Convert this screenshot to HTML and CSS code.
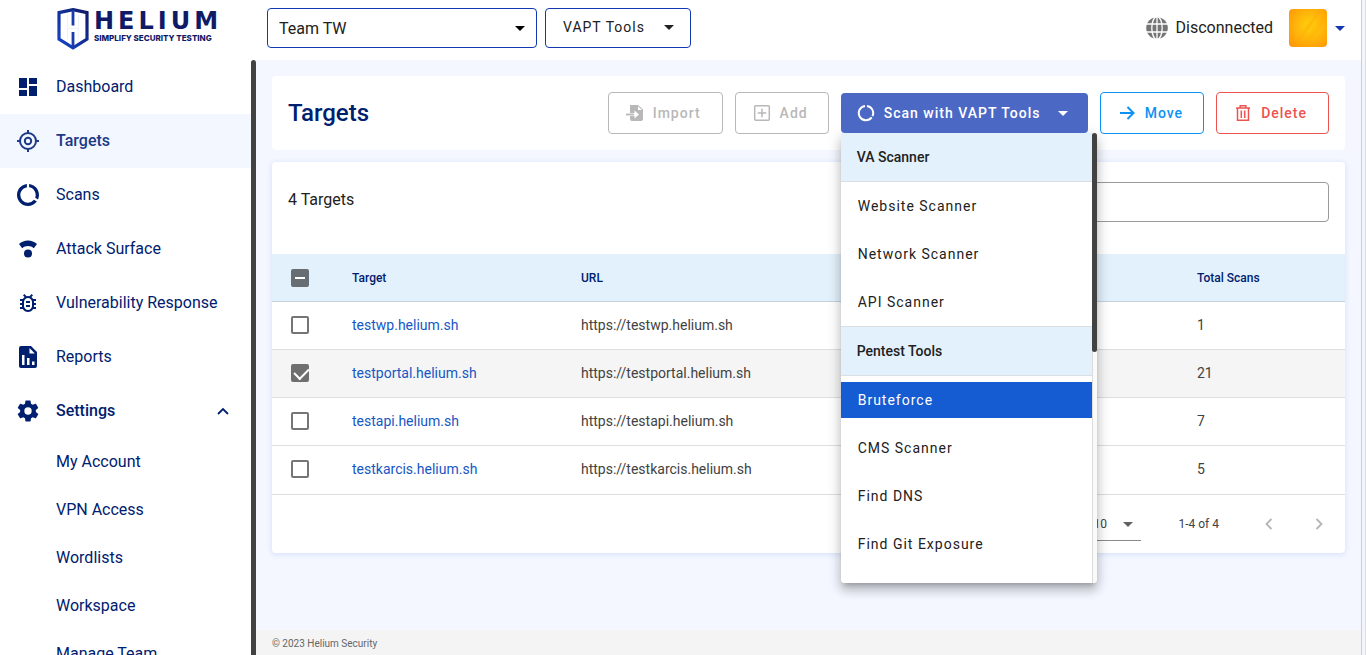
FILE: index.html
```html
<!DOCTYPE html>
<html lang="en">
<head>
<meta charset="utf-8">
<title>Targets - Helium</title>
<link rel="stylesheet" href="styles.css">
</head>
<body>
<div class="app">
  <header class="topbar">
    <a class="logo" href="#">
      <svg class="logo-mark" width="32" height="42" viewBox="0 0 32 42" aria-hidden="true">
        <defs><linearGradient id="shield" x1="1" y1="0" x2="0" y2="1"><stop offset="0" stop-color="#101a66"/><stop offset="1" stop-color="#1546cc"/></linearGradient></defs>
        <path d="M16 1.600 30 4.600V31L16 39.800 2 31V4.600Z" fill="none" stroke="url(#shield)" stroke-width="3.200"/>
        <path d="M16 2v15.500M16 24v15" fill="none" stroke="#1a3bab" stroke-width="2.800"/>
        <path d="M10.500 7v24M21.500 7v24M10.500 20.500h11" fill="none" stroke="#eef1f9" stroke-width="1"/>
      </svg>
      <span class="logo-text"><span class="logo-name">HELIUM</span><span class="logo-tag">SIMPLIFY SECURITY TESTING</span></span>
    </a>
    <div class="select-wrap team">
      <select class="team-select" aria-label="Team"><option>Team TW</option></select>
      <svg class="select-caret" width="10" height="5" viewBox="0 0 10 5"><path d="M0 0h10L5 5z" fill="currentColor"/></svg>
    </div>
    <button class="tools-btn" type="button">VAPT Tools <svg width="10" height="5" viewBox="0 0 10 5"><path d="M0 0h10L5 5z" fill="currentColor"/></svg></button>
    <div class="status">
      <svg width="24" height="24" viewBox="0 0 24 24" aria-hidden="true">
        <circle cx="12" cy="12" r="10.800" fill="#757575"/>
        <g fill="none" stroke="#fff" stroke-width="1.300"><path d="M1 8h22M1 16h22"/><ellipse cx="12" cy="12" rx="5.200" ry="11.500"/><path d="M12 0v24"/></g>
      </svg>
      <span class="label">Disconnected</span>
    </div>
    <button class="account" type="button" aria-label="Account"><span class="avatar"></span><svg width="10" height="5" viewBox="0 0 10 5"><path d="M0 0h10L5 5z" fill="currentColor"/></svg></button>
  </header>
  <div class="body">
    <nav class="sidebar">
      <div class="menu">
        <a class="item" href="#"><svg width="24" height="24" viewBox="0 0 24 24"><path fill="currentColor" d="M13 3v6h8V3m-8 18h8V11h-8M3 21h8v-6H3m0-2h8V3H3z"/></svg><span class="label">Dashboard</span></a>
        <a class="item active" href="#"><svg width="24" height="24" viewBox="0 0 24 24" fill="none" stroke="currentColor" stroke-width="2"><circle cx="12" cy="12" r="8"/><circle cx="12" cy="12" r="3.200"/><path d="M12 1v3M12 20v3M1 12h3M20 12h3"/></svg><span class="label">Targets</span></a>
        <a class="item" href="#"><svg width="24" height="24" viewBox="0 0 24 24"><path fill="currentColor" d="M13 2.050v3c3.390.490 6 3.390 6 6.950 0 .900-.180 1.750-.480 2.540l2.600 1.530c.560-1.240.880-2.620.880-4.070 0-5.180-3.950-9.450-9-9.950M12 19a7 7 0 0 1-7-7c0-3.530 2.610-6.430 6-6.920V2.050c-5.060.500-9 4.760-9 9.950a10 10 0 0 0 10 10c3.300 0 6.230-1.610 8.050-4.090l-2.600-1.530A6.900 6.900 0 0 1 12 19" transform="translate(-1.200 -1.200) scale(1.100)"/></svg><span class="label">Scans</span></a>
        <a class="item" href="#"><svg width="24" height="24" viewBox="0 0 24 24"><path fill="currentColor" d="M12 3.500c3.400 0 6.500 1.200 9 3.500l-3.200 4.200C16.200 9.700 14.200 9 12 9s-4.200.700-5.800 2.200L3 7c2.500-2.300 5.600-3.500 9-3.500"/><circle cx="12" cy="16.500" r="4" fill="currentColor"/></svg><span class="label">Attack Surface</span></a>
        <a class="item" href="#"><svg width="24" height="24" viewBox="0 0 24 24"><path fill="currentColor" d="M20 8h-2.810a5.990 5.990 0 0 0-1.820-1.960L17 4.410 15.590 3l-2.170 2.170a6 6 0 0 0-2.830 0L8.410 3 7 4.410l1.620 1.630C7.880 6.550 7.260 7.220 6.810 8H4v2h2.090c-.050.330-.090.660-.090 1v1H4v2h2v1c0 .340.040.670.090 1H4v2h2.810c1.040 1.790 2.970 3 5.190 3s4.150-1.210 5.190-3H20v-2h-2.090c.050-.330.090-.660.090-1v-1h2v-2h-2v-1c0-.340-.040-.670-.090-1H20zm-4 4v3c0 2.200-1.800 4-4 4s-4-1.800-4-4v-4c0-2.200 1.800-4 4-4s4 1.800 4 4zm-6 2h4v2h-4zm0-4h4v2h-4z"/></svg><span class="label">Vulnerability Response</span></a>
        <a class="item" href="#"><svg width="24" height="24" viewBox="0 0 24 24"><path fill="currentColor" fill-rule="evenodd" d="M5 1h10l6 6v14a2 2 0 0 1-2 2H5a2 2 0 0 1-2-2V3a2 2 0 0 1 2-2m8.500 2v5.500h5.300zM6 10v10h2.500V10zm5 3v7h2.500v-7zm5 3.500V20h2.500v-3.500z"/></svg><span class="label">Reports</span></a>
        <a class="item open" href="#"><svg width="24" height="24" viewBox="0 0 24 24"><path fill="currentColor" d="M12 15.500A3.500 3.500 0 0 1 8.500 12 3.500 3.500 0 0 1 12 8.500a3.500 3.500 0 0 1 3.500 3.500 3.500 3.500 0 0 1-3.500 3.500m7.430-2.530c.040-.320.070-.640.070-.970s-.030-.660-.070-1l2.110-1.630c.190-.150.240-.420.120-.640l-2-3.460c-.120-.220-.390-.310-.610-.220l-2.490 1c-.520-.390-1.060-.730-1.690-.980l-.370-2.650A.506.506 0 0 0 14 2h-4c-.250 0-.460.180-.500.420l-.370 2.650c-.630.250-1.170.590-1.690.980l-2.490-1c-.220-.090-.490 0-.610.220l-2 3.460c-.130.220-.070.490.120.640L4.570 11c-.040.340-.070.670-.070 1s.030.650.070.970l-2.110 1.660c-.190.150-.250.420-.120.640l2 3.460c.120.220.390.300.610.220l2.490-1.010c.520.400 1.060.740 1.690.990l.370 2.650c.040.240.250.420.500.420h4c.250 0 .460-.180.500-.420l.370-2.650c.630-.260 1.170-.590 1.690-.990l2.490 1.010c.220.080.490 0 .610-.220l2-3.460c.120-.220.070-.490-.120-.640z" transform="translate(-.6 -.6) scale(1.050)"/></svg><span class="label">Settings</span><svg class="chevron" width="12" height="12" viewBox="0 0 12 12" fill="none" stroke="currentColor" stroke-width="1.800"><path d="M1 9l5-5 5 5"/></svg></a>
        <a class="subitem" href="#"><span class="label">My Account</span></a>
        <a class="subitem" href="#"><span class="label">VPN Access</span></a>
        <a class="subitem" href="#"><span class="label">Wordlists</span></a>
        <a class="subitem" href="#"><span class="label">Workspace</span></a>
        <a class="subitem" href="#"><span class="label">Manage Team</span></a>
      </div>
      <div class="side-thumb"></div>
    </nav>
    <div class="content">
      <main class="page">
        <section class="card title-card">
          <h1>Targets</h1>
          <div class="actions">
            <button class="btn muted roomy" type="button" disabled><svg width="18" height="18" viewBox="0 0 18 18"><path fill="currentColor" fill-rule="evenodd" d="M4 1h8l5 4.500V15a2 2 0 0 1-2 2H6a2 2 0 0 1-2-2v-3h4.500v2.500L13 10.500 8.500 6.500V9H4zm8 1.200V6h4z"/><path fill="currentColor" d="M0 9.600h8v1.800H0z"/></svg>Import</button>
            <button class="btn muted" type="button" disabled><svg width="18" height="18" viewBox="0 0 18 18" fill="none" stroke="currentColor" stroke-width="1.500"><rect x="1.700" y="1.700" width="14.600" height="14.600" rx="1"/><path d="M9 4.700v8.600M4.700 9h8.600"/></svg>Add</button>
            <div class="scan">
              <button class="btn primary" type="button" aria-expanded="true"><svg width="18" height="18" viewBox="0 0 18 18" fill="none" stroke="currentColor" stroke-width="2"><path d="M8 1.900A7.200 7.200 0 1 0 14.700 13.400M15.500 12.100A7.200 7.200 0 0 0 10 1.900"/></svg>Scan with VAPT Tools<svg class="btn-caret" width="10" height="5" viewBox="0 0 10 5"><path d="M0 0h10L5 5z" fill="currentColor"/></svg></button>
              <div class="dropdown">
                <div class="options">
                  <div class="group">VA Scanner</div>
                  <button class="option" type="button"><span>Website Scanner</span></button>
                  <button class="option" type="button"><span>Network Scanner</span></button>
                  <button class="option" type="button"><span>API Scanner</span></button>
                  <div class="group divided">Pentest Tools</div>
                  <button class="option selected" type="button"><span>Bruteforce</span></button>
                  <button class="option" type="button"><span>CMS Scanner</span></button>
                  <button class="option" type="button"><span>Find DNS</span></button>
                  <button class="option" type="button"><span>Find Git Exposure</span></button>
                </div>
                <div class="track"><div class="thumb"></div></div>
              </div>
            </div>
            <button class="btn move" type="button"><svg width="18" height="18" viewBox="0 0 18 18" fill="none" stroke="currentColor" stroke-width="2"><path d="M2 9h13M9.500 3l6 6-6 6"/></svg>Move</button>
            <button class="btn delete roomy" type="button"><svg width="18" height="18" viewBox="0 0 18 18" fill="none" stroke="currentColor" stroke-width="1.500"><path d="M2 4h14M6.200 4V1.800h5.600V4M3.500 4v12.300h11V4M7.300 6.500v7.500M10.700 6.500v7.500"/></svg>Delete</button>
          </div>
        </section>
        <section class="card table-card">
          <div class="table-top">
            <h2>4 Targets</h2>
            <input class="search" type="text" aria-label="Search">
          </div>
          <table>
            <colgroup><col class="c-check"><col class="c-target"><col><col class="c-total"></colgroup>
            <thead><tr><th><input class="check mixed" type="checkbox" aria-label="Select all"></th><th>Target</th><th>URL</th><th>Total Scans</th></tr></thead>
            <tbody>
              <tr><td><input class="check" type="checkbox" aria-label="Select testwp"></td><td><a href="#">testwp.helium.sh</a></td><td>https://testwp.helium.sh</td><td>1</td></tr>
              <tr class="picked"><td><input class="check" type="checkbox" checked aria-label="Select testportal"></td><td><a href="#">testportal.helium.sh</a></td><td>https://testportal.helium.sh</td><td>21</td></tr>
              <tr><td><input class="check" type="checkbox" aria-label="Select testapi"></td><td><a href="#">testapi.helium.sh</a></td><td>https://testapi.helium.sh</td><td>7</td></tr>
              <tr><td><input class="check" type="checkbox" aria-label="Select testkarcis"></td><td><a href="#">testkarcis.helium.sh</a></td><td>https://testkarcis.helium.sh</td><td>5</td></tr>
            </tbody>
          </table>
          <div class="pager">
            <div class="select-wrap rows">
              <select class="rows-select" aria-label="Rows per page"><option>10</option></select>
              <svg class="select-caret" width="10" height="5" viewBox="0 0 10 5"><path d="M0 0h10L5 5z" fill="currentColor"/></svg>
            </div>
            <span class="range">1-4 of 4</span>
            <button class="page-btn" type="button" disabled aria-label="Previous page"><svg width="12" height="12" viewBox="0 0 12 12" fill="none" stroke="currentColor" stroke-width="1.800"><path d="M8.500 1l-5 5 5 5"/></svg></button>
            <button class="page-btn" type="button" disabled aria-label="Next page"><svg width="12" height="12" viewBox="0 0 12 12" fill="none" stroke="currentColor" stroke-width="1.800"><path d="M3.500 1l5 5-5 5"/></svg></button>
          </div>
        </section>
      </main>
      <footer class="footer">© 2023 Helium Security</footer>
    </div>
  </div>
</div>
<div class="page-track"></div>
</body>
</html>
```
FILE: styles.css
```css
* { box-sizing: border-box; }
body {
  margin: 0;
  height: 100vh;
  display: flex;
  overflow: hidden;
  font-family: Roboto, "Liberation Sans", sans-serif;
  font-size: 16px;
  color: #212121;
  background: #fff;
}
button, select, input { font-family: inherit; margin: 0; }
svg { display: block; flex: none; }
a { text-decoration: none; }
.app { flex: 1; min-width: 0; display: flex; flex-direction: column; }
.page-track { width: 5px; background: #f3f5fc; border-left: 1px solid #ccced4; border-right: 1px solid #dcdee4; }
.label { padding-bottom: 2px; }

.topbar { height: 60px; display: flex; align-items: flex-start; padding: 8px 16px 0 57px; background: #fff; }
.logo { width: 210px; display: flex; gap: 5px; color: #101a66; }
.logo-text { display: flex; flex-direction: column; }
.logo-name { font: bold 24px/26px "DejaVu Sans", sans-serif; letter-spacing: 4px; white-space: nowrap; }
.logo-tag { font: 800 8px/8px Inter, sans-serif; white-space: nowrap; }
.select-wrap { position: relative; }
.select-wrap select { appearance: none; background: none; outline: none; }
.select-caret { position: absolute; right: 12px; top: 50%; margin-top: -2px; pointer-events: none; }
.team { width: 270px; color: #000; }
.team-select { width: 100%; height: 40px; border: 1px solid #1238b0; border-radius: 4px; padding: 0 11px; font-size: 16px; color: #212121; }
.tools-btn { width: 146px; height: 40px; margin-left: 8px; padding: 0 16px 2px 17px; display: flex; align-items: center; justify-content: space-between; background: #fff; border: 1px solid #1238b0; border-radius: 4px; font-size: 14px; letter-spacing: 1px; color: #212121; }
.status { height: 40px; margin-left: auto; display: flex; align-items: center; gap: 7px; }
.account { height: 40px; margin-left: 16px; padding: 0; display: flex; align-items: center; gap: 8px; background: none; border: 0; color: #1238b0; }
.avatar { width: 38px; height: 38px; border-radius: 4px; background: linear-gradient(125deg, transparent 44%, #ffa80080 50%, transparent 53%, #ffa50055 66%, transparent 70%), radial-gradient(circle at 55% 45%, #ffc60c 20%, #ffa909 65%, #ff8d08); }

.body { flex: 1; min-height: 0; display: flex; }
.sidebar { width: 256px; display: flex; overflow: hidden; background: #fff; }
.menu { flex: 1; }
.side-thumb { width: 5px; border-radius: 3px 3px 0 0; background: #424242; }
.item { height: 54px; padding: 0 22px 0 16px; display: flex; align-items: center; gap: 16px; color: #00206f; }
.item.active { background: #f3f7ff; color: #1c3a85; font-weight: 500; }
.item.open { font-weight: 500; }
.chevron { margin-left: auto; }
.subitem { height: 48px; padding-left: 56px; display: flex; align-items: center; color: #00206f; }

.content { flex: 1; min-width: 0; display: flex; flex-direction: column; background: #f4f7ff; }
.page { flex: 1; padding: 16px; display: flex; flex-direction: column; gap: 12px; }
.card { background: #fff; border-radius: 4px; }
.title-card { padding: 16px; display: flex; align-items: center; justify-content: space-between; }
h1 { margin: 0; font-size: 24px; font-weight: 500; line-height: 32px; color: #00206f; }
.actions { display: flex; align-items: center; gap: 12px; }
.btn { height: 42px; padding: 0 20px 0 17px; display: flex; align-items: center; gap: 9px; background: #fff; border: 1px solid; border-radius: 4px; font-size: 14px; font-weight: 500; letter-spacing: 1px; white-space: nowrap; }
.roomy { padding-right: 21px; }
.muted { color: #b8b8b8; }
.move { color: #0c91f5; }
.delete { color: #ed5350; }
.primary { position: relative; z-index: 3; width: 247px; height: 40px; border: 0; padding: 0 20px 0 16px; color: #fff; background: #4b68c5; }
.btn-caret { margin-left: auto; }

.scan { position: relative; }
.dropdown { position: absolute; z-index: 2; top: 100%; left: 0; width: 256px; height: 450px; display: flex; overflow: hidden; background: #fff; border-radius: 0 0 4px 4px; }
.scan::after { content: ""; position: absolute; z-index: 1; top: 100%; left: 0; width: 256px; height: 450px; border-radius: 4px; box-shadow: 0 5px 5px -3px #0003, 0 8px 10px 1px #00000024, 0 3px 14px 2px #0000001f; }
.options { flex: 1; }
.group { height: 49px; padding-left: 16px; display: flex; align-items: center; background: #e3f1fc; border-bottom: 1px solid #dcdfe2; font-size: 14px; font-weight: 500; color: #212121; }
.divided { height: 50px; border-top: 1px solid #dcdfe2; }
.option { width: 100%; height: 48px; padding: 0; display: flex; align-items: center; background: none; border: 0; font-size: 14px; letter-spacing: 1px; color: #212121; }
.option span { flex: 1; padding-left: 17px; text-align: left; line-height: 36px; }
.selected span { background: #155bd2; color: #fff; }
.track { width: 5px; background: #fafafa; border-left: 1px solid #dcdcdc; }
.thumb { width: 5px; height: 219px; margin-left: -1px; border-radius: 3px; background: #424242; }

.table-card { box-shadow: 0 1px 5px 1px #dbe4fd; }
.table-top { height: 92px; padding: 20px 16px 0; display: flex; justify-content: space-between; align-items: flex-start; }
h2 { margin: 6px 0 0; font-size: 16px; font-weight: 400; line-height: 24px; }
.search { width: 320px; height: 40px; border: 1px solid #9a9a9a; border-radius: 4px; padding: 0 12px; font-size: 16px; outline: none; }
table { width: 100%; table-layout: fixed; border-collapse: separate; border-spacing: 0; }
.c-check { width: 64px; }
.c-target { width: 229px; }
.c-total { width: 164px; }
th, td { height: 48px; padding: 0 16px; text-align: left; vertical-align: middle; border-bottom: 1px solid #dedede; }
th { background: #e3f1fc; border-bottom-color: #c5d2db; font-size: 12px; font-weight: 500; color: #00206f; }
td { padding-bottom: 2px; font-size: 14px; color: #424242; }
tr:last-child td { height: 49px; }
td a { color: #1657c4; }
.picked td { background: #f5f5f5; }
.check { appearance: none; display: block; position: relative; width: 18px; height: 18px; margin-left: 3px; border: 2px solid #757575; border-radius: 2px; background: #fff; }
.mixed { background: #666e73; border-color: #666e73; }
.check:checked { background: #6f6f6f; border-color: #6f6f6f; }
.mixed::after { content: ""; position: absolute; left: 2px; top: 6px; width: 10px; height: 2px; background: #fff; }
.check:checked::after { content: ""; position: absolute; left: 4px; top: -1px; width: 7px; height: 12px; border: solid #fff; border-width: 0 2px 2px 0; transform: rotate(45deg); }
th .check { margin-top: 1px; }
.pager { height: 58px; padding-right: 10px; display: flex; align-items: center; justify-content: flex-end; font-size: 12px; color: #424242; }
.rows { width: 56px; color: #616161; }
.rows .select-caret { right: 8px; }
.rows-select { width: 100%; height: 34px; border: 0; border-bottom: 1px solid #8a8a8a; border-radius: 0; padding: 0 8px; font-size: 12px; color: #424242; }
.range { margin: 0 34px 0 37px; }
.page-btn { width: 32px; height: 32px; padding: 0; display: grid; place-items: center; background: none; border: 0; color: #b5b5b5; }
.page-btn + .page-btn { margin-left: 18px; }
.footer { height: 25px; padding: 2px 0 0 16px; display: flex; align-items: center; background: #f4f4f4; font-size: 10px; color: #666; }
```
